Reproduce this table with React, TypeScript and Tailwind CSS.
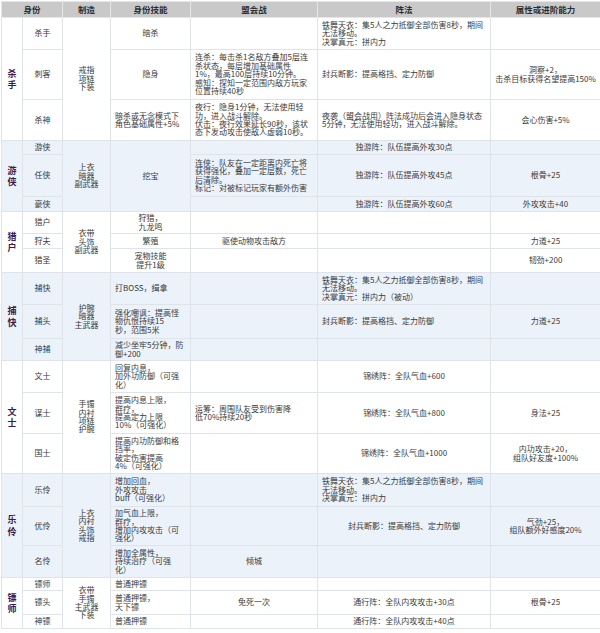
import clsx from "clsx";

type Align = "c" | "l";

interface Cell {
  lines: string[];
  align?: Align;
}

interface Row {
  title: string;
  h: string;
  skill?: Cell;
  guild: Cell;
  formation: Cell;
  attr: Cell;
}

interface Group {
  name: string;
  blue: boolean;
  craft: string[];
  skillSpan?: Cell;
  rows: Row[];
}

const e = (): Cell => ({ lines: [] });
const c = (...lines: string[]): Cell => ({ lines, align: "c" });
const l = (...lines: string[]): Cell => ({ lines, align: "l" });

const groups: Group[] = [
  {
    name: "杀手",
    blue: false,
    craft: ["戒指", "项链", "下装"],
    rows: [
      {
        title: "杀手",
        h: "h-[32px]",
        skill: c("暗杀"),
        guild: e(),
        formation: l("铁舞天衣：集5人之力抵御全部伤害8秒，期间", "无法移动。", "决掌真元：拼内力"),
        attr: e(),
      },
      {
        title: "刺客",
        h: "h-[50px]",
        skill: c("隐身"),
        guild: l(
          "连杀：每击杀1名敌方叠加5层连",
          "杀状态，每层增加基础属性",
          "1%，最高100层持续10分钟。",
          "感知：探知一定范围内敌方玩家",
          "位置持续40秒"
        ),
        formation: l("封兵断影：提高格挡、定力防御"),
        attr: c("洞察+2，", "击杀目标获得名望提高150%"),
      },
      {
        title: "杀神",
        h: "h-[41px]",
        skill: l("暗杀或无念模式下", "角色基础属性+5%"),
        guild: l(
          "夜行：隐身1分钟，无法使用轻",
          "功，进入战斗解除。",
          "伏击：夜行效果延长90秒，该状",
          "态下发动攻击使敌人虚弱10秒。"
        ),
        formation: l("夜袭（盟会战用）阵法成功后会进入隐身状态", "5分钟，无法使用轻功，进入战斗解除。"),
        attr: c("会心伤害+5%"),
      },
    ],
  },
  {
    name: "游侠",
    blue: true,
    craft: ["上衣", "暗器", "副武器"],
    skillSpan: c("挖宝"),
    rows: [
      { title: "游侠", h: "h-[14px]", guild: e(), formation: c("独游阵：队伍提高外攻30点"), attr: e() },
      {
        title: "任侠",
        h: "h-[42px]",
        guild: l(
          "连侠：队友在一定距离内死亡将",
          "获得强化，叠加一定层数，死亡",
          "后清除。",
          "标记：对被标记玩家有额外伤害"
        ),
        formation: c("独游阵：队伍提高外攻45点"),
        attr: c("根骨+25"),
      },
      { title: "豪侠", h: "h-[15px]", guild: e(), formation: c("独游阵：队伍提高外攻60点"), attr: c("外攻攻击+40") },
    ],
  },
  {
    name: "猎户",
    blue: false,
    craft: ["衣带", "头饰", "副武器"],
    rows: [
      { title: "猎户", h: "h-[22px]", skill: c("狩猎，", "九龙鸣"), guild: e(), formation: e(), attr: e() },
      { title: "狩夫", h: "h-[15px]", skill: c("繁殖"), guild: c("驱使动物攻击敌方"), formation: e(), attr: c("力道+25") },
      { title: "猎圣", h: "h-[24px]", skill: c("宠物技能", "提升1级"), guild: e(), formation: e(), attr: c("韧劲+200") },
    ],
  },
  {
    name: "捕快",
    blue: true,
    craft: ["护腕", "暗器", "主武器"],
    rows: [
      {
        title: "捕快",
        h: "h-[32px]",
        skill: l("打BOSS，缉拿"),
        guild: e(),
        formation: l("铁舞天衣：集5人之力抵御全部伤害8秒，期间", "无法移动。", "决掌真元：拼内力（被动）"),
        attr: e(),
      },
      {
        title: "捕头",
        h: "h-[34px]",
        skill: l("强化嘲讽：提高怪", "物仇恨持续15", "秒，范围5米"),
        guild: e(),
        formation: l("封兵断影：提高格挡、定力防御"),
        attr: c("力道+25"),
      },
      { title: "神捕", h: "h-[22px]", skill: l("减少坐牢5分钟，防", "御+200"), guild: e(), formation: e(), attr: e() },
    ],
  },
  {
    name: "文士",
    blue: false,
    craft: ["手镯", "内衬", "项链", "护腕"],
    rows: [
      {
        title: "文士",
        h: "h-[32px]",
        skill: l("回复内息，", "加外功防御（可强", "化）"),
        guild: e(),
        formation: c("锦绣阵：全队气血+600"),
        attr: e(),
      },
      {
        title: "谋士",
        h: "h-[41px]",
        skill: l("提高内息上限，", "群疗，", "提高定力上限", "10%（可强化）"),
        guild: l("运筹：周围队友受到伤害降", "低70%持续20秒"),
        formation: c("锦绣阵：全队气血+800"),
        attr: c("身法+25"),
      },
      {
        title: "国士",
        h: "h-[40px]",
        skill: l("提高内功防御和格", "挡率，", "破定伤害提高", "4%（可强化）"),
        guild: e(),
        formation: c("锦绣阵：全队气血+1000"),
        attr: c("内功攻击+20，", "组队好友度+100%"),
      },
    ],
  },
  {
    name: "乐伶",
    blue: true,
    craft: ["上衣", "内衬", "头饰", "戒指"],
    rows: [
      {
        title: "乐伶",
        h: "h-[33px]",
        skill: l("增加回血，", "外攻攻击", "buff（可强化）"),
        guild: e(),
        formation: l("铁舞天衣：集5人之力抵御全部伤害8秒，期间", "无法移动。", "决掌真元：拼内力"),
        attr: e(),
      },
      {
        title: "优伶",
        h: "h-[39px]",
        skill: l("加气血上限，", "群疗，", "增加内攻攻击（可", "强化）"),
        guild: e(),
        formation: c("封兵断影：提高格挡、定力防御"),
        attr: c("气劲+25，", "组队额外好感度20%"),
      },
      {
        title: "名伶",
        h: "h-[32px]",
        skill: l("增加全属性，", "持续治疗（可强", "化）"),
        guild: c("倾城"),
        formation: e(),
        attr: e(),
      },
    ],
  },
  {
    name: "镖师",
    blue: false,
    craft: ["衣带", "手镯", "主武器", "下装"],
    rows: [
      { title: "镖师", h: "h-[13px]", skill: l("普通押镖"), guild: e(), formation: e(), attr: e() },
      {
        title: "镖头",
        h: "h-[24px]",
        skill: l("普通押镖，", "天下镖"),
        guild: c("免死一次"),
        formation: c("通行阵：全队内攻攻击+30点"),
        attr: c("根骨+25"),
      },
      { title: "神镖", h: "h-[14px]", skill: l("普通押镖"), guild: e(), formation: c("通行阵：全队内攻攻击+40点"), attr: e() },
    ],
  },
];

const td = "border border-[#dfe4eb] px-[4px] py-0 align-middle whitespace-nowrap";

function Lines({ lines }: { lines: string[] }) {
  return (
    <>
      {lines.map((line, i) => (
        <span key={i}>
          {i > 0 && <br />}
          {line}
        </span>
      ))}
    </>
  );
}

function Td({ cell, rowSpan }: { cell: Cell; rowSpan?: number }) {
  return (
    <td rowSpan={rowSpan} className={clsx(td, cell.align === "l" ? "text-left" : "text-center")}>
      <Lines lines={cell.lines} />
    </td>
  );
}

export default function App() {
  return (
    <div className="w-[600px] h-[633px] bg-white pl-px pt-px font-['Noto_Sans_CJK_SC',sans-serif] text-[8px] leading-[8.4px] text-[#3a3a3a]">
      <table className="w-[599px] table-fixed border-collapse">
        <colgroup>
          <col className="w-[21px]" />
          <col className="w-[40px]" />
          <col className="w-[48px]" />
          <col className="w-[80px]" />
          <col className="w-[127px]" />
          <col className="w-[173px]" />
          <col className="w-[110px]" />
        </colgroup>
        <thead>
          <tr className="h-[16px] bg-[#c9c9c9] text-[8.5px] font-bold text-[#2e2e2e]">
            <th colSpan={2} className="border border-[#e6e6e6] font-bold">身份</th>
            <th className="border border-[#e6e6e6] font-bold">制造</th>
            <th className="border border-[#e6e6e6] font-bold">身份技能</th>
            <th className="border border-[#e6e6e6] font-bold">盟会战</th>
            <th className="border border-[#e6e6e6] font-bold">阵法</th>
            <th className="border border-[#e6e6e6] font-bold">属性或进阶能力</th>
          </tr>
        </thead>
        <tbody>
          {groups.map((g) =>
            g.rows.map((r, i) => (
              <tr key={g.name + r.title} className={clsx(r.h, g.blue ? "bg-[#ebf2fa]" : "bg-white")}>
                {i === 0 && (
                  <td
                    rowSpan={g.rows.length}
                    className={clsx(td, "text-center text-[9px] leading-[11.5px] font-bold text-[#3b1d4d]")}
                  >
                    <Lines lines={g.name.split("")} />
                  </td>
                )}
                <td className={clsx(td, "text-center")}>{r.title}</td>
                {i === 0 && <Td cell={c(...g.craft)} rowSpan={g.rows.length} />}
                {g.skillSpan ? i === 0 && <Td cell={g.skillSpan} rowSpan={g.rows.length} /> : <Td cell={r.skill ?? e()} />}
                <Td cell={r.guild} />
                <Td cell={r.formation} />
                <Td cell={r.attr} />
              </tr>
            ))
          )}
        </tbody>
      </table>
    </div>
  );
}
